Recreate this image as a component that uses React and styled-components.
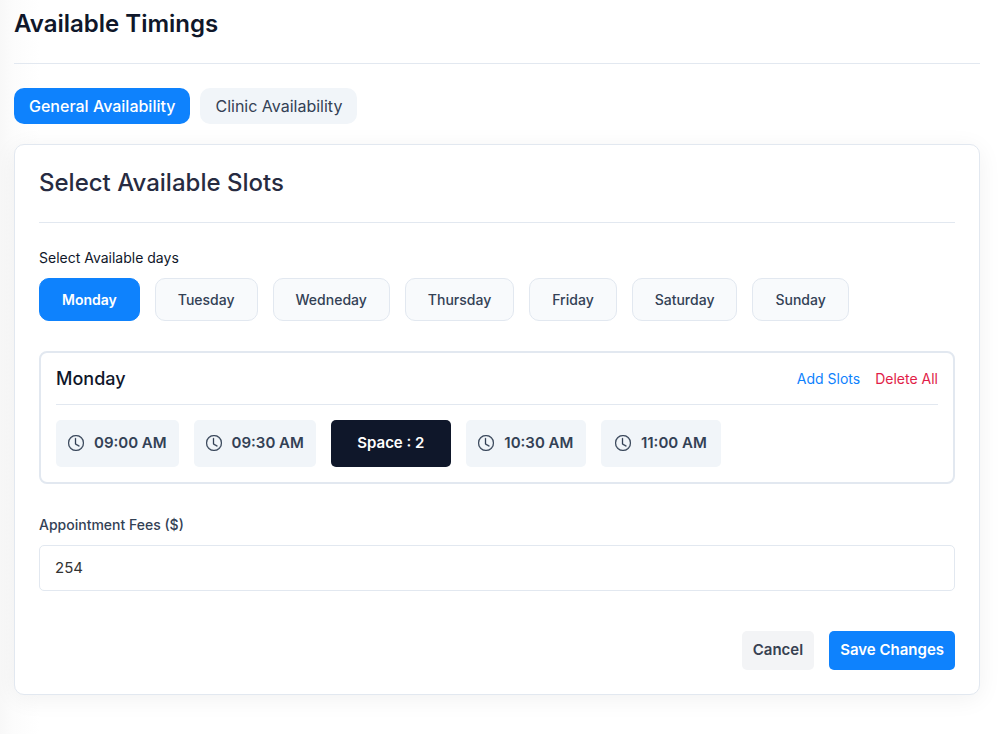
import React, { useState } from "react";
import styled, { createGlobalStyle, css } from "styled-components";
import { BsClock } from "react-icons/bs";

const GlobalStyle = createGlobalStyle`
  *, *::before, *::after { box-sizing: border-box; }
  body {
    margin: 0;
    background: #fff;
    color: #0f172a;
    font-family: Inter, "Liberation Sans", sans-serif;
    font-size: 16px;
  }
  button, input { font: inherit; }
  h1, h2, h3 { margin: 0; }
`;

const Page = styled.main`
  min-height: 100vh;
  padding: 0 27px 39px 14px;
  background: linear-gradient(to right, #f8f8f8, #fcfcfc 14px, #fff 40px);
`;

const PageHeader = styled.header`
  padding: 8px 0 23px;
  margin-bottom: 24px;
  border-bottom: 1px solid #e2e8f0;
`;

const PageTitle = styled.h1`
  font-size: 24px;
  font-weight: 600;
  line-height: 32px;
`;

const Tabs = styled.div`
  display: flex;
  flex-wrap: wrap;
  gap: 10px;
  margin-bottom: 20px;
`;

const Tab = styled.button`
  height: 36px;
  padding: 0 15px;
  border: 0;
  border-radius: 10px;
  background: #f1f5f9;
  color: #334155;
  font-size: 16px;
  line-height: 24px;
  cursor: pointer;
  ${({ $active }) => $active && css`
    background: #0e82fd;
    color: #fff;
    font-weight: 500;
  `}
`;

const Card = styled.section`
  padding: 24px;
  border: 1px solid #e2e8f0;
  border-radius: 10px;
  background: #fff;
  box-shadow: 0 4px 24px rgba(0, 0, 0, 0.06);
`;

const CardTitle = styled.h2`
  padding-bottom: 25px;
  margin-bottom: 24px;
  border-bottom: 1px solid #e2e8f0;
  color: #272b41;
  font-size: 24px;
  font-weight: 500;
  line-height: 28px;
`;

const Label = styled.label`
  display: block;
  margin-bottom: 9px;
  color: ${({ $dark }) => ($dark ? "#0f172a" : "#334155")};
  font-size: 14px;
  font-weight: ${({ $dark }) => ($dark ? 400 : 500)};
  line-height: 22px;
`;

const DayList = styled.div`
  display: flex;
  flex-wrap: wrap;
  gap: 15px;
  margin-bottom: 30px;
`;

const Day = styled.button`
  height: 43px;
  padding: 0 22px;
  border: 1px solid #e2e8f0;
  border-radius: 10px;
  background: #f8fafc;
  color: #334155;
  font-size: 14px;
  font-weight: 500;
  line-height: 21px;
  cursor: pointer;
  ${({ $active }) => $active && css`
    border-color: #0e82fd;
    background: #0e82fd;
    color: #fff;
    font-weight: 600;
  `}
`;

const SlotBox = styled.section`
  padding: 15px;
  margin-bottom: 30px;
  border: 2px solid #e2e8f0;
  border-radius: 8px;
`;

const SlotHeader = styled.div`
  display: flex;
  align-items: center;
  justify-content: space-between;
  padding-bottom: 14px;
  margin-bottom: 15px;
  border-bottom: 1px solid #e2e8f0;
`;

const SlotTitle = styled.h3`
  font-size: 18px;
  font-weight: 500;
  line-height: 22px;
`;

const SlotActions = styled.div`
  display: flex;
  gap: 15px;
`;

const ActionLink = styled.a`
  color: ${({ $danger }) => ($danger ? "#e11d48" : "#0e82fd")};
  font-size: 14px;
  line-height: 22px;
  text-decoration: none;
`;

const SlotList = styled.div`
  display: flex;
  flex-wrap: wrap;
  gap: 15px;
`;

const Slot = styled.button`
  display: flex;
  align-items: center;
  justify-content: center;
  gap: 10px;
  min-width: 120px;
  height: 47px;
  padding: 0 12px 2px;
  border: 0;
  border-radius: 5px;
  background: ${({ $space }) => ($space ? "#0f172a" : "#f1f5f9")};
  color: ${({ $space }) => ($space ? "#fff" : "#334155")};
  font-size: 15px;
  font-weight: 600;
  line-height: 22px;
  cursor: pointer;
`;

const ClockIcon = styled(BsClock)`
  flex: none;
  width: 16px;
  height: 16px;
  stroke-width: 0.3;
`;

const FeeInput = styled.input`
  display: block;
  width: 100%;
  height: 46px;
  padding: 0 15px 2px;
  margin-bottom: 40px;
  border: 1px solid #e2e8f0;
  border-radius: 5px;
  background: #fff;
  color: #333;
  font-size: 15px;
`;

const Footer = styled.div`
  display: flex;
  justify-content: flex-end;
  gap: 15px;
`;

const Button = styled.button`
  height: 39px;
  padding: 0 11px 2px;
  border: 0;
  border-radius: 5px;
  background: ${({ $primary }) => ($primary ? "#0e82fd" : "#f3f4f6")};
  color: ${({ $primary }) => ($primary ? "#fff" : "#374151")};
  font-size: 15px;
  font-weight: 600;
  line-height: 22px;
  cursor: pointer;
`;

const tabs = ["General Availability", "Clinic Availability"];
const days = ["Monday", "Tuesday", "Wedneday", "Thursday", "Friday", "Saturday", "Sunday"];
const slots = ["09:00 AM", "09:30 AM", "Space : 2", "10:30 AM", "11:00 AM"];

export default function App() {
  const [tab, setTab] = useState(tabs[0]);
  const [day, setDay] = useState(days[0]);
  const [fee, setFee] = useState("254");

  return (
    <>
      <GlobalStyle />
      <Page>
        <PageHeader>
          <PageTitle>Available Timings</PageTitle>
        </PageHeader>
        <Tabs role="tablist">
          {tabs.map((name) => (
            <Tab key={name} type="button" role="tab" aria-selected={tab === name} $active={tab === name} onClick={() => setTab(name)}>
              {name}
            </Tab>
          ))}
        </Tabs>
        <Card>
          <CardTitle>Select Available Slots</CardTitle>
          <Label as="div" id="days-label" $dark>Select Available days</Label>
          <DayList role="group" aria-labelledby="days-label">
            {days.map((name) => (
              <Day key={name} type="button" aria-pressed={day === name} $active={day === name} onClick={() => setDay(name)}>
                {name}
              </Day>
            ))}
          </DayList>
          <SlotBox>
            <SlotHeader>
              <SlotTitle>{day}</SlotTitle>
              <SlotActions>
                <ActionLink href="#add">Add Slots</ActionLink>
                <ActionLink href="#delete" $danger>Delete All</ActionLink>
              </SlotActions>
            </SlotHeader>
            <SlotList>
              {slots.map((name) => {
                const space = name.startsWith("Space");
                return (
                  <Slot key={name} type="button" $space={space}>
                    {!space && <ClockIcon aria-hidden="true" />}
                    {name}
                  </Slot>
                );
              })}
            </SlotList>
          </SlotBox>
          <Label htmlFor="fee">Appointment Fees ($)</Label>
          <FeeInput id="fee" type="text" value={fee} onChange={(e) => setFee(e.target.value)} />
          <Footer>
            <Button type="button">Cancel</Button>
            <Button type="submit" $primary>Save Changes</Button>
          </Footer>
        </Card>
      </Page>
    </>
  );
}
